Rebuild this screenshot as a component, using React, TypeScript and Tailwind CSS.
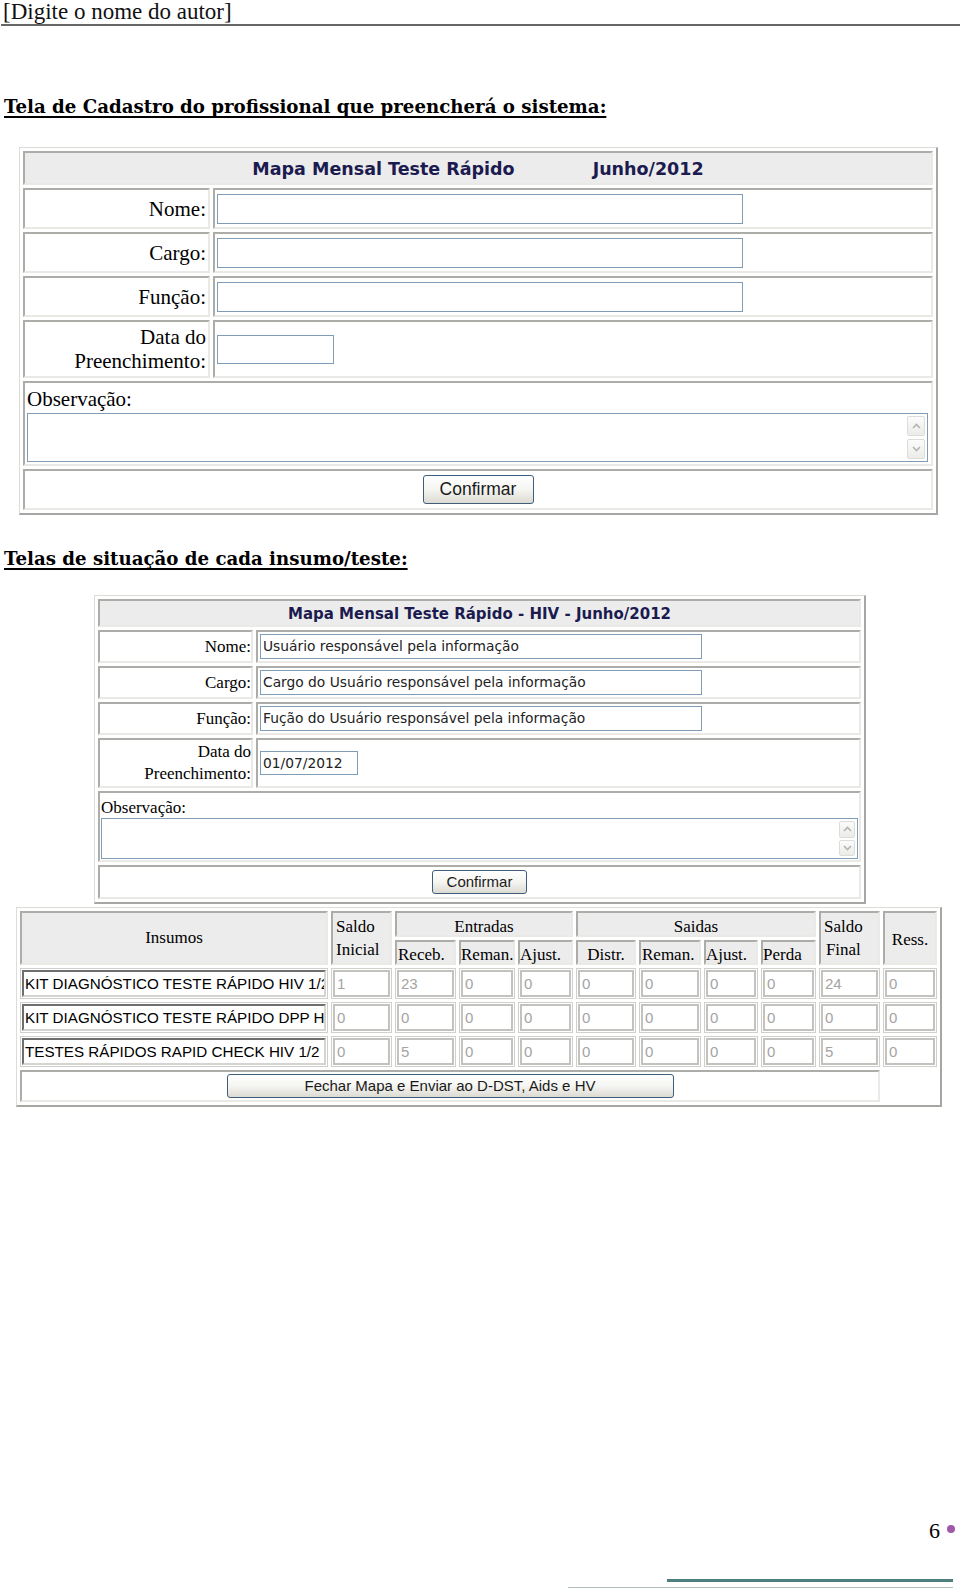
import React from "react";

const F_TIMES = "font-['Liberation_Serif','Times_New_Roman',serif]";
const F_ARIAL = "font-['Liberation_Sans',Arial,sans-serif]";
const F_VERD = "font-['DejaVu_Sans',Verdana,sans-serif]";
const F_DJS = "font-['DejaVu_Serif',Georgia,serif]";

const CELL =
  "border-2 border-t-[#acaca8] border-l-[#acaca8] border-b-[#e9e9e5] border-r-[#e9e9e5]";
const HCELL = CELL + " bg-[#ececec]";
const OUTER =
  "border-t border-l border-r-2 border-b-2 border-t-[#dcdcd8] border-l-[#dcdcd8] border-r-[#a6a6a2] border-b-[#a6a6a2] bg-white";
const BTN =
  "rounded-[3px] border border-[#3f5d7d] bg-linear-to-b from-white via-[#f5f5f2] to-[#dcdad2] text-[#1a1a1a] flex items-center justify-center";
const INPUT = "border border-[#7f9db9] bg-white";

function Chevron({ up }: { up: boolean }) {
  return (
    <svg width="9" height="6" viewBox="0 0 9 6">
      <polyline
        points={up ? "1,5 4.5,1.5 8,5" : "1,1 4.5,4.5 8,1"}
        fill="none"
        stroke="#b4b4b4"
        strokeWidth="1.6"
      />
    </svg>
  );
}

function ScrollBtn({ up }: { up: boolean }) {
  return (
    <div className="flex-1 rounded-[2px] border border-[#dcdcd8] bg-linear-to-b from-[#fcfcfc] to-[#ebebe8] flex items-center justify-center">
      <Chevron up={up} />
    </div>
  );
}

function Form1() {
  const rows = ["Nome:", "Cargo:", "Função:"];
  return (
    <div className={`ml-[19px] mt-[29px] w-[919px] p-[3px] flex flex-col gap-[3px] ${OUTER}`}>
      <div
        className={`h-[34px] pt-[3px] ${HCELL} flex items-center justify-center gap-[78px] ${F_VERD} font-bold text-[17.5px] leading-none text-[#1b1b4f]`}
      >
        <span>Mapa Mensal Teste Rápido</span>
        <span>Junho/2012</span>
      </div>
      {rows.map((r) => (
        <div key={r} className="flex gap-[3px] h-[41px]">
          <div
            className={`w-[187px] shrink-0 ${CELL} flex items-center justify-end pr-[2px] ${F_TIMES} text-[21px] leading-[24px] text-black`}
          >
            {r}
          </div>
          <div className={`flex-1 ${CELL} flex items-center pl-[2px]`}>
            <div className={`w-[526px] h-[30px] ${INPUT}`} />
          </div>
        </div>
      ))}
      <div className="flex gap-[3px] h-[58px]">
        <div
          className={`w-[187px] shrink-0 ${CELL} flex items-center justify-end pr-[2px] ${F_TIMES} text-[21px] leading-[24px] text-black`}
        >
          <div className="text-right">
            Data do
            <br />
            Preenchimento:
          </div>
        </div>
        <div className={`flex-1 ${CELL} flex items-center pl-[2px]`}>
          <div className={`w-[117px] h-[29px] ${INPUT}`} />
        </div>
      </div>
      <div className={`h-[85px] ${CELL} flex flex-col pl-[2px] pt-[5px]`}>
        <div className={`${F_TIMES} text-[21px] leading-[23px] text-black`}>Observação:</div>
        <div className={`mt-[2px] w-[901px] h-[49px] ${INPUT} flex justify-end p-[2px]`}>
          <div className="w-[18px] flex flex-col gap-[3px]">
            <ScrollBtn up />
            <ScrollBtn up={false} />
          </div>
        </div>
      </div>
      <div className={`h-[41px] ${CELL} flex items-center justify-center`}>
        <div className={`w-[111px] h-[29px] ${BTN} ${F_ARIAL} text-[17.5px]`}>Confirmar</div>
      </div>
    </div>
  );
}

function Form2() {
  const rows: [string, string][] = [
    ["Nome:", "Usuário responsável pela informação"],
    ["Cargo:", "Cargo do Usuário responsável pela informação"],
    ["Função:", "Fução do Usuário responsável pela informação"],
  ];
  return (
    <div className={`ml-[94px] mt-[25px] w-[772px] p-[3px] flex flex-col gap-[3px] ${OUTER}`}>
      <div
        className={`h-[28px] pt-[3px] ${HCELL} flex items-center justify-center ${F_VERD} font-bold text-[15px] leading-none text-[#1b1b4f]`}
      >
        Mapa Mensal Teste Rápido - HIV - Junho/2012
      </div>
      {rows.map(([l, v]) => (
        <div key={l} className="flex gap-[3px] h-[33px]">
          <div
            className={`w-[155px] shrink-0 ${CELL} flex items-center justify-end ${F_TIMES} text-[17px] leading-[20px] text-black`}
          >
            {l}
          </div>
          <div className={`flex-1 ${CELL} flex items-center pl-[2px]`}>
            <div
              className={`w-[442px] h-[25px] ${INPUT} pl-[2px] ${F_VERD} text-[13.8px] leading-[23px] text-[#222] whitespace-nowrap overflow-hidden`}
            >
              {v}
            </div>
          </div>
        </div>
      ))}
      <div className="flex gap-[3px] h-[50px]">
        <div
          className={`w-[155px] shrink-0 ${CELL} flex items-center justify-end ${F_TIMES} text-[17px] leading-[22px] text-black`}
        >
          <div className="text-right">
            Data do
            <br />
            Preenchimento:
          </div>
        </div>
        <div className={`flex-1 ${CELL} flex items-center pl-[2px]`}>
          <div
            className={`w-[98px] h-[24px] ${INPUT} pl-[2px] ${F_VERD} text-[13.8px] leading-[22px] text-[#222]`}
          >
            01/07/2012
          </div>
        </div>
      </div>
      <div className={`h-[71px] ${CELL} flex flex-col pl-[1px] pt-[5px]`}>
        <div className={`${F_TIMES} text-[17px] leading-[19px] text-black`}>Observação:</div>
        <div className={`mt-[1px] w-[757px] h-[41px] ${INPUT} flex justify-end p-[2px]`}>
          <div className="w-[16px] flex flex-col gap-[2px]">
            <ScrollBtn up />
            <ScrollBtn up={false} />
          </div>
        </div>
      </div>
      <div className={`h-[34px] ${CELL} flex items-center justify-center`}>
        <div className={`w-[95px] h-[24px] ${BTN} ${F_ARIAL} text-[15px]`}>Confirmar</div>
      </div>
    </div>
  );
}

const DATA: { name: string; vals: string[] }[] = [
  {
    name: "KIT DIAGNÓSTICO TESTE RÁPIDO HIV 1/2",
    vals: ["1", "23", "0", "0", "0", "0", "0", "0", "24", "0"],
  },
  {
    name: "KIT DIAGNÓSTICO TESTE RÁPIDO DPP HIV",
    vals: ["0", "0", "0", "0", "0", "0", "0", "0", "0", "0"],
  },
  {
    name: "TESTES RÁPIDOS RAPID CHECK HIV 1/2 - TR",
    vals: ["0", "5", "0", "0", "0", "0", "0", "0", "5", "0"],
  },
];

function Insumos() {
  const hText = `${F_TIMES} text-[17px] text-black`;
  return (
    <div
      className={`ml-[16px] mt-[3px] w-[926px] p-[3px] ${OUTER} grid grid-cols-[308px_61px_61px_56px_55px_60px_62px_54px_55px_61px_54px] grid-rows-[26px_25px_31px_31px_31px_32px] gap-[3px]`}
    >
      <div className={`col-start-1 row-start-1 row-span-2 ${HCELL} flex items-center justify-center leading-[20px] ${hText}`}>
        Insumos
      </div>
      <div className={`col-start-2 row-start-1 row-span-2 ${HCELL} flex flex-col justify-center gap-[2px] pl-[3px] leading-[21px] ${hText}`}>
        <span>Saldo</span>
        <span>Inicial</span>
      </div>
      <div className={`col-start-3 col-span-3 row-start-1 ${HCELL} flex items-end justify-center leading-[16px] ${hText}`}>
        Entradas
      </div>
      <div className={`col-start-6 col-span-4 row-start-1 ${HCELL} flex items-end justify-center leading-[16px] ${hText}`}>
        Saidas
      </div>
      <div className={`col-start-10 row-start-1 row-span-2 ${HCELL} flex items-center pl-[3px] leading-[21px] ${hText}`}>
        <div className="flex flex-col items-center gap-[2px]">
          <span>Saldo</span>
          <span>Final</span>
        </div>
      </div>
      <div className={`col-start-11 row-start-1 row-span-2 ${HCELL} flex items-center justify-center pt-[3px] leading-[20px] ${hText}`}>
        Ress.
      </div>
      <div className={`col-start-3 row-start-2 ${HCELL} flex items-end pl-[1px] leading-[16px] ${hText}`}>Receb.</div>
      <div className={`col-start-4 row-start-2 ${HCELL} flex items-end leading-[16px] ${hText}`}>Reman.</div>
      <div className={`col-start-5 row-start-2 ${HCELL} flex items-end leading-[16px] ${hText}`}>Ajust.</div>
      <div className={`col-start-6 row-start-2 ${HCELL} flex items-end justify-center leading-[16px] ${hText}`}>Distr.</div>
      <div className={`col-start-7 row-start-2 ${HCELL} flex items-end pl-[1px] leading-[16px] ${hText}`}>Reman.</div>
      <div className={`col-start-8 row-start-2 ${HCELL} flex items-end leading-[16px] ${hText}`}>Ajust.</div>
      <div className={`col-start-9 row-start-2 ${HCELL} flex items-end leading-[16px] ${hText}`}>Perda</div>

      {DATA.map((row) => (
        <React.Fragment key={row.name}>
          <div className="border border-[#cfcfcb] p-[1px] min-w-0">
            <div
              className={`h-full border-2 border-t-[#6e6e6e] border-l-[#6e6e6e] border-b-[#d4d4d0] border-r-[#d4d4d0] bg-white ${F_ARIAL} text-[15.2px] leading-[23px] text-black whitespace-nowrap overflow-hidden pl-[1px]`}
            >
              {row.name}
            </div>
          </div>
          {row.vals.map((v, i) => (
            <div key={i} className="border border-[#cfcfcb] p-[1px]">
              <div
                className={`h-full border-2 border-[#c2c2be] bg-white ${F_ARIAL} text-[15px] leading-[23px] text-[#a4a4a4] pl-[2px]`}
              >
                {v}
              </div>
            </div>
          ))}
        </React.Fragment>
      ))}

      <div className={`col-start-1 col-span-10 row-start-6 ${CELL} flex items-center justify-center`}>
        <div className={`w-[447px] h-[24px] ${BTN} ${F_ARIAL} text-[15px]`}>
          Fechar Mapa e Enviar ao D-DST, Aids e HV
        </div>
      </div>
    </div>
  );
}

export default function App() {
  return (
    <div className="w-[960px] h-[1593px] bg-white flex flex-col overflow-hidden">
      <div className={`h-[24px] pt-[1px] pl-[3px] ${F_TIMES} text-[23px] leading-[22px] text-[#111]`}>
        [Digite o nome do autor]
      </div>
      <div className="ml-[1px] h-[2px] bg-[#666666]" />

      <div
        className={`mt-[70px] pl-[4px] ${F_DJS} font-bold text-[18.2px] leading-[22px] text-black underline decoration-2 underline-offset-[3px] [text-decoration-skip-ink:none]`}
      >
        Tela de Cadastro do profissional que preencherá o sistema:
      </div>

      <Form1 />

      <div
        className={`mt-[33px] pl-[4px] ${F_DJS} font-bold text-[18.2px] leading-[22px] text-black underline decoration-2 underline-offset-[3px] [text-decoration-skip-ink:none]`}
      >
        Telas de situação de cada insumo/teste:
      </div>

      <Form2 />
      <Insumos />

      <div className="mt-auto flex flex-col">
        <div className="flex justify-end pr-[5px] gap-[7px]">
          <span className={`${F_TIMES} text-[22px] leading-[22px] text-black`}>6</span>
          <span className="mt-[5px] w-[8px] h-[8px] rounded-full bg-[#a058a8]" />
        </div>
        <div className="mt-[37px] ml-[667px] w-[286px] h-[3px] bg-[#4e7e7e]" />
        <div className="mt-[5px] ml-[568px] w-[385px] h-[1px] bg-[#b0bebe]" />
        <div className="h-[5px]" />
      </div>
    </div>
  );
}
